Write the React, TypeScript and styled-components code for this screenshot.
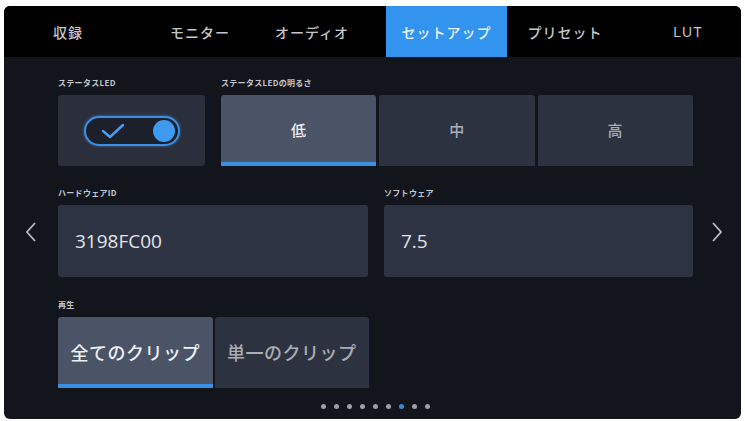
import styled, { createGlobalStyle } from "styled-components";

const GlobalStyle = createGlobalStyle`
  html, body {
    margin: 0;
    padding: 0;
    background: #ffffff;
  }
  body {
    font-family: "Noto Sans CJK JP", "Noto Sans", sans-serif;
  }
`;

const tabs = [
  { label: "収録", w: 128 },
  { label: "モニター", w: 136 },
  { label: "オーディオ", w: 88 },
  { label: "セットアップ", w: 121, ml: 30, active: true },
  { label: "プリセット", w: 116 },
  { label: "LUT", w: 106, ml: 12 },
];

const levels = ["低", "中", "高"];
const dots = 9;
const activeDot = 6;

const App = () => {
  return (
    <>
      <GlobalStyle />
      <Screen>
        <Header>
          {tabs.map((t) => (
            <Tab key={t.label} $w={t.w} $ml={t.ml || 0} $active={!!t.active}>
              {t.label}
            </Tab>
          ))}
        </Header>

        <Body>
          <Arrow>
            <svg width="14" height="22" viewBox="0 0 14 22">
              <path d="M11 2 L3 11 L11 20" fill="none" stroke="#b9bcc4" strokeWidth="1.8" />
            </svg>
          </Arrow>

          <Content>
            {/* status led */}
            <RowOne>
              <Section>
                <Label>ステータスLED</Label>
                <Card $h={71}>
                  <Toggle>
                    <svg width="24" height="16" viewBox="0 0 24 16">
                      <path
                        d="M2 8 L9 14 L22 2"
                        fill="none"
                        stroke="#4a9df0"
                        strokeWidth="2.4"
                        strokeLinecap="round"
                        strokeLinejoin="round"
                      />
                    </svg>
                    <Knob />
                  </Toggle>
                </Card>
              </Section>
              <Section>
                <Label>ステータスLEDの明るさ</Label>
                <Segments $cols={3} $gap={3}>
                  {levels.map((l, i) => (
                    <Choice key={l} $active={i === 0} $size={15}>
                      {l}
                    </Choice>
                  ))}
                </Segments>
              </Section>
            </RowOne>

            {/* ids */}
            <RowTwo>
              <Section>
                <Label>ハードウェアID</Label>
                <ValueCard>3198FC00</ValueCard>
              </Section>
              <Section>
                <Label>ソフトウェア</Label>
                <ValueCard>7.5</ValueCard>
              </Section>
            </RowTwo>

            {/* playback */}
            <Section>
              <Label>再生</Label>
              <Segments $cols={2} $gap={2} $width={311}>
                <Choice $active $size={18}>全てのクリップ</Choice>
                <Choice $active={false} $size={18}>単一のクリップ</Choice>
              </Segments>
            </Section>

            <Dots>
              {Array.from({ length: dots }).map((_, i) => (
                <Dot key={i} $active={i === activeDot} />
              ))}
            </Dots>
          </Content>

          <Arrow>
            <svg width="14" height="22" viewBox="0 0 14 22">
              <path d="M3 2 L11 11 L3 20" fill="none" stroke="#b9bcc4" strokeWidth="1.8" />
            </svg>
          </Arrow>
        </Body>
      </Screen>
    </>
  );
};

export default App;

const Screen = styled.div`
  margin: 6px 4px 0 4px;
  width: 737px;
  height: 413px;
  border-radius: 6px;
  overflow: hidden;
  background: #13151d;
  display: flex;
  flex-direction: column;
`;

const Header = styled.div`
  height: 51px;
  background: #000000;
  display: flex;
  align-items: stretch;
`;

const Tab = styled.div<{ $w: number; $ml: number; $active: boolean }>`
  width: ${({ $w }) => $w}px;
  margin-left: ${({ $ml }) => $ml}px;
  display: flex;
  align-items: center;
  justify-content: center;
  font-size: 14px;
  font-weight: 500;
  letter-spacing: 1px;
  color: ${({ $active }) => ($active ? "#e8f2ff" : "#c4c6cc")};
  background: ${({ $active }) => ($active ? "#3294ee" : "transparent")};
  font-family: "Liberation Sans", "Noto Sans CJK JP", sans-serif;
`;

const Body = styled.div`
  flex: 1;
  display: grid;
  grid-template-columns: 54px 635px 48px;
`;

const Arrow = styled.div`
  display: flex;
  align-items: center;
  justify-content: center;
  padding-bottom: 12px;
`;

const Content = styled.div`
  padding-top: 20px;
  display: flex;
  flex-direction: column;
  gap: 22px;
`;

const RowOne = styled.div`
  display: grid;
  grid-template-columns: 147px 472px;
  column-gap: 16px;
`;

const RowTwo = styled.div`
  display: grid;
  grid-template-columns: 310px 309px;
  column-gap: 16px;
  margin-top: -1px;
`;

const Section = styled.div`
  display: flex;
  flex-direction: column;
  gap: 6px;
`;

const Label = styled.div`
  height: 12px;
  line-height: 12px;
  font-size: 8px;
  font-weight: 700;
  color: #c4c6cc;
  letter-spacing: 0.3px;
`;

const Card = styled.div<{ $h: number }>`
  height: ${({ $h }) => $h}px;
  background: #2a2f3b;
  border-radius: 3px;
  display: flex;
  align-items: center;
  justify-content: center;
`;

const Toggle = styled.div`
  width: 96px;
  height: 30px;
  box-sizing: border-box;
  border: 2px solid #3a8ee4;
  box-shadow: 0 0 3px rgba(90, 160, 240, 0.6);
  border-radius: 16px;
  background: #1b202b;
  display: flex;
  align-items: center;
  justify-content: flex-end;
  gap: 28px;
  padding-right: 3px;
`;

const Knob = styled.div`
  width: 22px;
  height: 22px;
  border-radius: 50%;
  background: #3d9cf2;
`;

const Segments = styled.div<{ $cols: number; $gap: number; $width?: number }>`
  display: grid;
  grid-template-columns: repeat(${({ $cols }) => $cols}, 1fr);
  column-gap: ${({ $gap }) => $gap}px;
  width: ${({ $width }) => ($width ? `${$width}px` : "auto")};
`;

const Choice = styled.div<{ $active: boolean; $size: number }>`
  height: 71px;
  box-sizing: border-box;
  display: flex;
  align-items: center;
  justify-content: center;
  font-size: ${({ $size }) => $size}px;
  font-weight: 500;
  color: ${({ $active }) => ($active ? "#eef0f4" : "#a9adb6")};
  background: ${({ $active }) => ($active ? "#4b5466" : "#2d3240")};
  border-bottom: 4px solid ${({ $active }) => ($active ? "#3a8ee4" : "transparent")};
  padding-top: 2px;
  border-radius: 3px 3px 0 0;
  letter-spacing: 0.5px;
`;

const ValueCard = styled.div`
  height: 72px;
  background: #2d3342;
  border-radius: 3px;
  display: flex;
  align-items: center;
  padding-left: 17px;
  font-size: 19px;
  color: #e2e4e9;
  font-family: "Open Sans", "Liberation Sans", sans-serif;
`;

const Dots = styled.div`
  display: flex;
  justify-content: center;
  gap: 8px;
  margin-top: -6px;
`;

const Dot = styled.div<{ $active: boolean }>`
  width: 5px;
  height: 5px;
  border-radius: 50%;
  background: ${({ $active }) => ($active ? "#3a86d6" : "#9a9ea8")};
`;
